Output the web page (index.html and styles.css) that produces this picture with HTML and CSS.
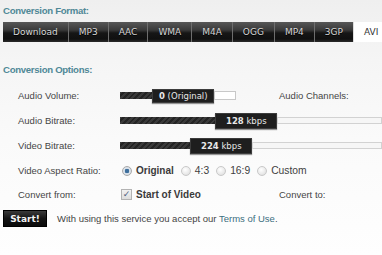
FILE: index.html
```html
<!DOCTYPE html>
<html>
<head>
<meta charset="utf-8">
<link rel="stylesheet" href="styles.css">
</head>
<body>
<div class="page">
  <h2 class="section-title">Conversion Format:</h2>
  <ul class="tabs">
    <li class="tab">Download</li>
    <li class="tab">MP3</li>
    <li class="tab">AAC</li>
    <li class="tab">WMA</li>
    <li class="tab">M4A</li>
    <li class="tab">OGG</li>
    <li class="tab">MP4</li>
    <li class="tab">3GP</li>
    <li class="tab active">AVI</li>
  </ul>

  <h2 class="section-title options-title">Conversion Options:</h2>
  <div class="options">
    <div class="row">
      <div class="label">Audio Volume:</div>
      <div class="control">
        <div class="slider slider-short">
          <span class="fill" style="width:32px"></span>
          <span class="handle"><b>0</b> (Original)</span>
          <span class="rest"></span>
        </div>
      </div>
      <div class="label">Audio Channels:</div>
    </div>
    <div class="row">
      <div class="label">Audio Bitrate:</div>
      <div class="control wide">
        <div class="slider">
          <span class="fill" style="width:95px"></span>
          <span class="handle handle-big"><b>128</b> kbps</span>
          <span class="rest"></span>
        </div>
      </div>
    </div>
    <div class="row">
      <div class="label">Video Bitrate:</div>
      <div class="control wide">
        <div class="slider">
          <span class="fill" style="width:70px"></span>
          <span class="handle handle-big"><b>224</b> kbps</span>
          <span class="rest"></span>
        </div>
      </div>
    </div>
    <div class="row">
      <div class="label">Video Aspect Ratio:</div>
      <div class="control wide radios">
        <span class="choice"><span class="radio checked"></span><b>Original</b></span>
        <span class="choice"><span class="radio"></span>4:3</span>
        <span class="choice"><span class="radio"></span>16:9</span>
        <span class="choice"><span class="radio"></span>Custom</span>
      </div>
    </div>
    <div class="row row-last">
      <div class="label">Convert from:</div>
      <div class="control">
        <span class="choice"><span class="checkbox">&#10003;</span><b>Start of Video</b></span>
      </div>
      <div class="label">Convert to:</div>
    </div>
  </div>

  <div class="footer">
    <button class="start">Start!</button>
    <span class="note">With using this service you accept our <a href="#" class="link">Terms of Use</a>.</span>
  </div>
</div>
</body>
</html>
```

FILE: styles.css
```css
html, body {
  margin: 0;
  padding: 0;
}
body {
  width: 382px;
  height: 255px;
  overflow: hidden;
  background: linear-gradient(#efefef 0, #f5f5f5 60px, #fafafa 140px, #fefefe 255px);
  font-family: "Liberation Sans", Arial, sans-serif;
  font-size: 9.5px;
  color: #454545;
}
.page {
  padding: 4px 0 0 3px;
}
.section-title {
  margin: 0;
  height: 14px;
  line-height: 14px;
  font-family: "Liberation Sans", Arial, sans-serif;
  font-size: 9.6px;
  letter-spacing: -0.3px;
  font-weight: bold;
  color: #4f8896;
}
.tabs {
  list-style: none;
  margin: 4px 0 0 0;
  padding: 0;
  display: flex;
  height: 20px;
  white-space: nowrap;
}
.tab {
  flex: none;
  height: 20px;
  line-height: 20px;
  padding: 0 10px;
  font-family: "DejaVu Sans", Verdana, sans-serif;
  font-size: 9px;
  color: #d8d8d8;
  background: linear-gradient(#575757 0, #3a3a3a 40%, #161616 55%, #101010 85%, #2a2a2a 100%);
  border-left: 1px solid #6e6e6e;
  text-shadow: 0 1px 0 #000;
}
.tab:first-child {
  border-left: none;
}
.tab.active {
  flex: 1;
  background: #fff;
  color: #333;
  text-shadow: none;
  border-left: 1px solid #ddd;
}
.options-title {
  margin-top: 21px;
}
.options {
  margin: 6px 0 0 15px;
}
.row {
  display: grid;
  grid-template-columns: 102px 159px auto;
  align-items: center;
  height: 25px;
  white-space: nowrap;
}
.row-last {
  height: 22px;
}
.control.wide {
  grid-column: 2 / -1;
}
.slider {
  display: flex;
  align-items: center;
  width: 262px;
}
.slider-short {
  width: 116px;
}
.fill {
  flex: none;
  height: 7px;
  background: repeating-linear-gradient(135deg, #3a3a3a 0 2px, #242424 2px 4px);
}
.handle {
  flex: none;
  height: 12px;
  line-height: 12px;
  padding: 0 5px 0 6px;
  background: #1e1e1e;
  border: 1px solid #3c3c3c;
  color: #e8e8e8;
  font-family: "DejaVu Sans", Verdana, sans-serif;
  font-size: 8.5px;
  box-shadow: 0 1px 1px rgba(0,0,0,0.4);
}
.handle-big {
  height: 14px;
  line-height: 14px;
  padding: 0 9px 0 10px;
}
.rest {
  flex: 1;
  height: 5px;
  background: #f6f6f6;
  border: 1px solid #d2d2d2;
}
.slider-short .rest {
  height: 7px;
  background: #fff;
  border-color: #c8c8c8;
}
.radios {
  display: flex;
  gap: 7px;
  padding-left: 2px;
}
.choice {
  display: inline-flex;
  align-items: center;
  gap: 4px;
  color: #3f3f3f;
}
.radios .choice {
  font-size: 10.3px;
}
.choice b {
  color: #3a3a3a;
  font-size: 10px;
}
.radio {
  width: 8px;
  height: 8px;
  border-radius: 50%;
  border: 1px solid #c9c9c9;
  background: radial-gradient(circle at 40% 35%, #fff 0, #e9e9e9 60%, #d6d6d6 100%);
}
.radio.checked {
  border-color: #a9a9a9;
  background: radial-gradient(circle, #3e6f9c 0 2px, #dfe6ee 2.6px, #cfd4da 100%);
}
.checkbox {
  width: 9px;
  height: 9px;
  margin-left: 1px;
  border: 1px solid #b3b3b3;
  background: linear-gradient(#f2f2f2, #dcdcdc);
  color: #4c5f80;
  font-size: 9px;
  line-height: 9px;
  text-align: center;
  font-family: "DejaVu Sans", sans-serif;
}
.footer {
  margin-top: 5px;
  display: flex;
  align-items: center;
  gap: 10px;
  white-space: nowrap;
}
.start {
  width: 44px;
  height: 17px;
  padding: 0;
  border: 1px solid #000;
  background: linear-gradient(#3a3a3a, #141414 50%, #0a0a0a);
  color: #f2f2f2;
  font-family: "DejaVu Sans", Verdana, sans-serif;
  font-weight: bold;
  font-size: 9px;
}
.note {
  color: #444;
}
.link {
  color: #3b6e80;
  text-decoration: none;
}
```
